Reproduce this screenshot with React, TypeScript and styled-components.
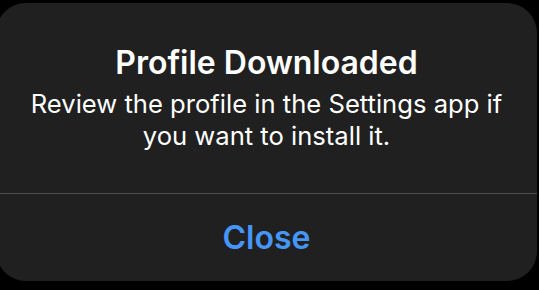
import React from "react";
import styled, { createGlobalStyle } from "styled-components";

const GlobalStyle = createGlobalStyle`
  html, body {
    margin: 0;
    padding: 0;
    background: #000;
    overflow: hidden;
  }
  body {
    font-family: Inter, "Noto Sans", "Liberation Sans", sans-serif;
    -webkit-font-smoothing: antialiased;
  }
`;

const Screen = styled.div`
  width: 539px;
  height: 290px;
  padding-top: 3px;
  box-sizing: border-box;
  overflow: hidden;
`;

const AlertCard = styled.div`
  margin-left: -4px;
  width: 541px;
  height: 278px;
  background-color: #202020;
  border-radius: 30px;
  display: flex;
  flex-direction: column;
  overflow: hidden;
`;

const AlertContent = styled.div`
  height: 190px;
  display: flex;
  flex-direction: column;
  align-items: center;
  padding: 41px 30px 0;
  box-sizing: border-box;
  text-align: center;
  color: #fff;
`;

const Title = styled.div`
  font-size: 32px;
  font-weight: 600;
  line-height: 38px;
`;

const Message = styled.div`
  margin-top: 6px;
  font-size: 25.6px;
  font-weight: 400;
  line-height: 32px;
`;

const Divider = styled.div`
  height: 1px;
  background-color: #505052;
`;

const ActionButton = styled.button`
  flex: 1;
  border: none;
  background: transparent;
  color: #4596f7;
  font-family: inherit;
  font-size: 32px;
  font-weight: 600;
  cursor: pointer;
  padding: 0;
`;

export default function App() {
  return (
    <>
      <GlobalStyle />
      <Screen>
        <AlertCard>
          <AlertContent>
            <Title>Profile Downloaded</Title>
            <Message>
              Review the profile in the Settings app if you want to install it.
            </Message>
          </AlertContent>
          <Divider />
          <ActionButton>Close</ActionButton>
        </AlertCard>
      </Screen>
    </>
  );
}
